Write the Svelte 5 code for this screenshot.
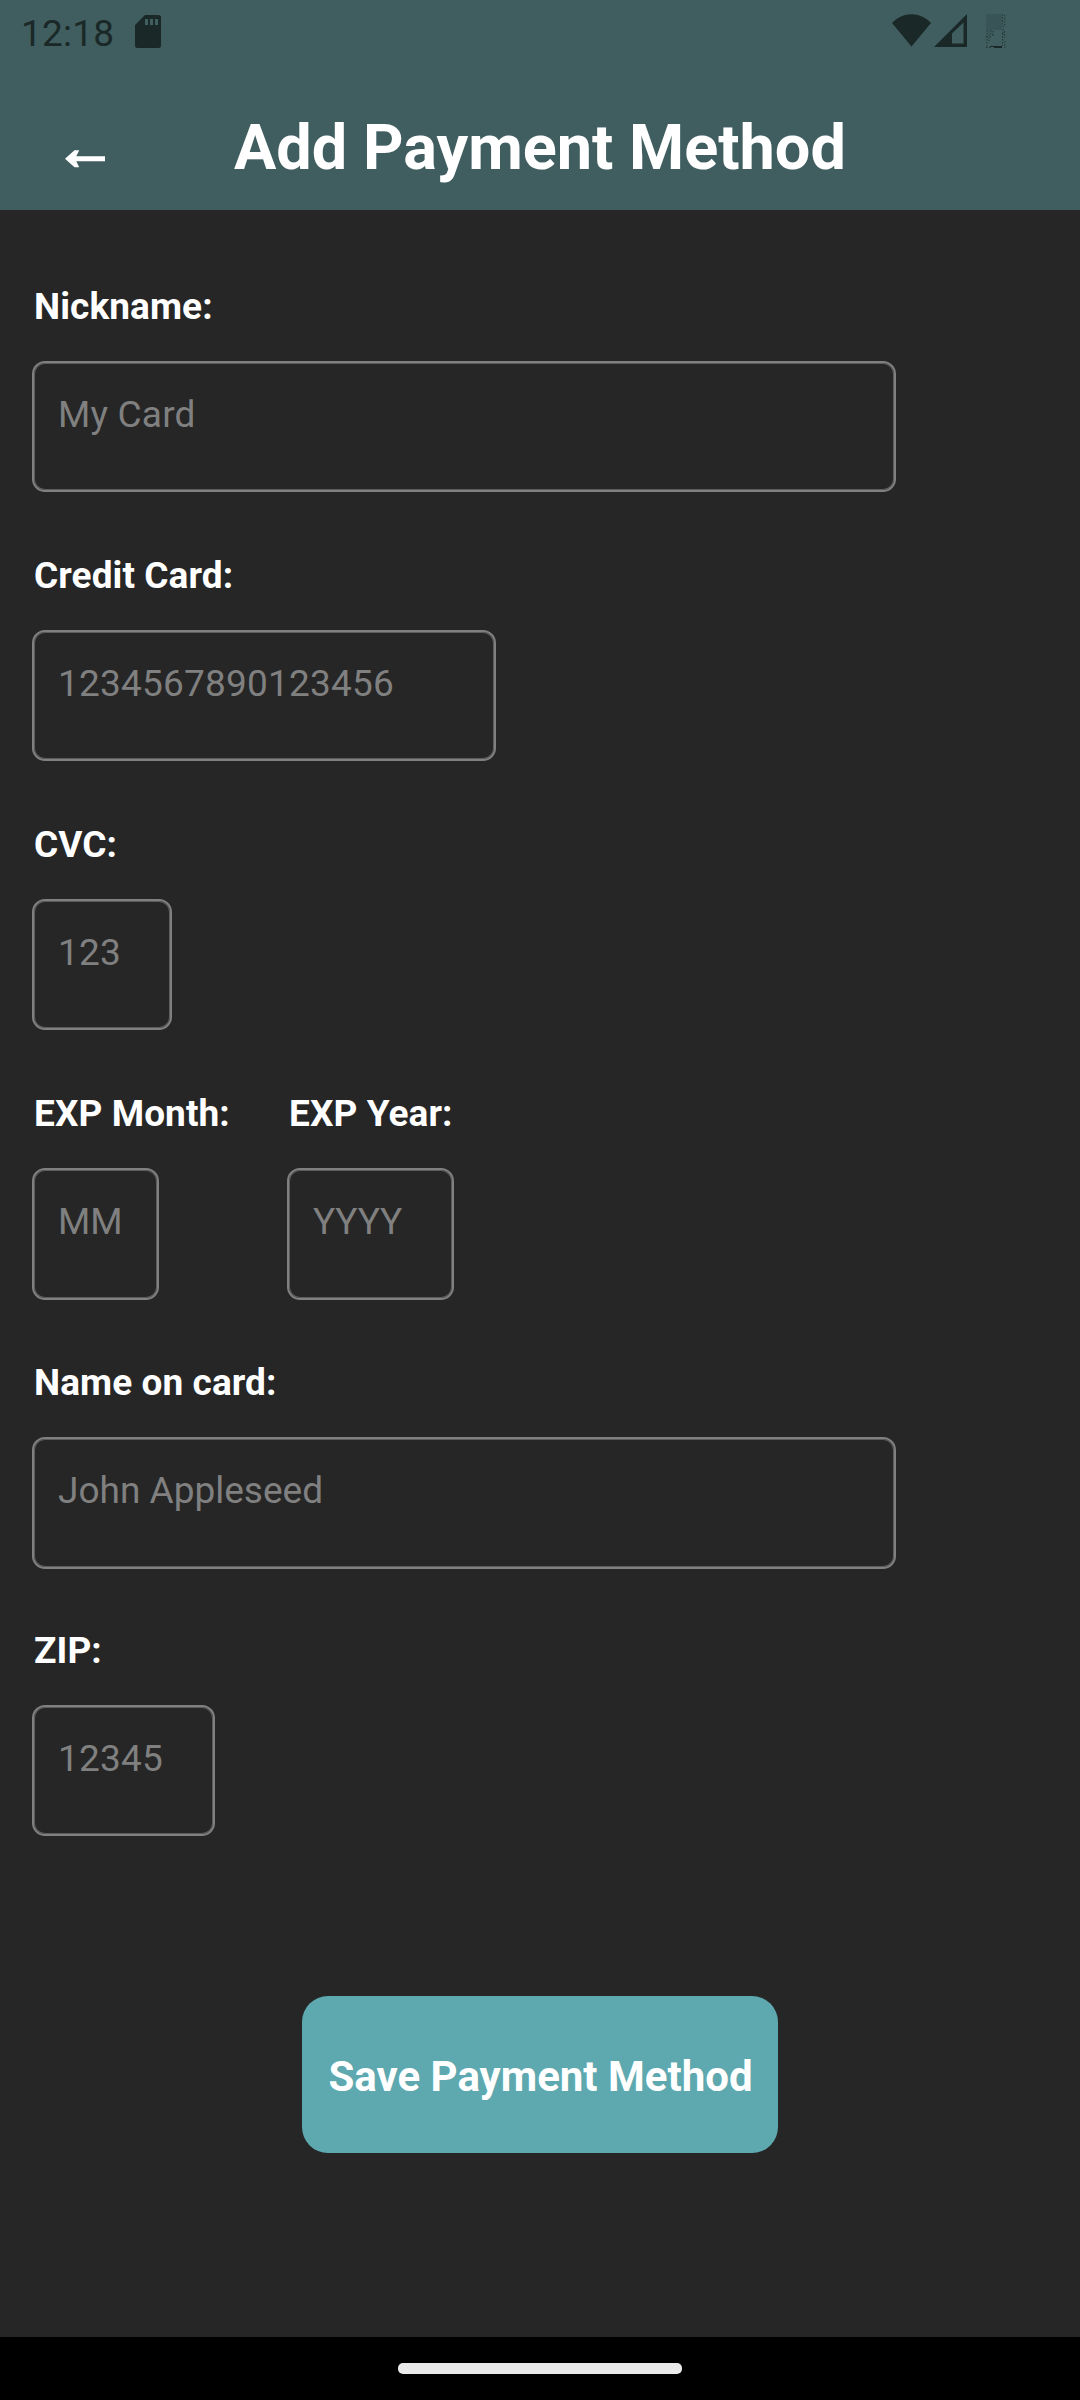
<script>
  const rows = [
    [{ id: 'nickname', label: 'Nickname:', hint: 'My Card' }],
    [{ id: 'card', label: 'Credit Card:', hint: '1234567890123456' }],
    [{ id: 'cvc', label: 'CVC:', hint: '123' }],
    [
      { id: 'month', label: 'EXP Month:', hint: 'MM' },
      { id: 'year', label: 'EXP Year:', hint: 'YYYY' }
    ],
    [{ id: 'holder', label: 'Name on card:', hint: 'John Appleseed' }],
    [{ id: 'zip', label: 'ZIP:', hint: '12345' }]
  ];
</script>

<div class="screen">
  <header>
    <div class="status">
      <span class="time">12:18</span>
      <svg class="sd" width="26" height="33" viewBox="0 0 26 33">
        <path fill-rule="evenodd" d="M10 0H23.5Q26 0 26 2.5V30.5Q26 33 23.5 33H2.5Q0 33 0 30.5V10ZM10 4V10H13V4ZM15 4V10H18V4ZM20 4V10H23V4Z" />
      </svg>
      <svg class="wifi" width="39" height="33" viewBox="0 0 39 33">
        <path d="M0 9C10.500-2.700 28.500-2.700 39 9L19.500 32.500Z" />
      </svg>
      <svg class="signal" width="33" height="33" viewBox="0 0 33 33">
        <path fill-rule="evenodd" d="M33 0V33H0ZM29.500 8.500L18 19.500V29.500H29.500Z" />
      </svg>
      <svg class="battery" width="20" height="34" viewBox="0 0 20 34">
        <path opacity=".16" d="M0 0H16V16H0Z" />
        <path class="trace" d="M16.500 0V11M18.700 1V12M17 12V20M18.500 17V24M16.500 19V32M18.800 27V34M1 16V33M3 17V27M5 16V20M7 17V22M4 23L7 20" />
        <path d="M8 32H16V34H8Z" />
        <path d="M4 32H8V33H4Z" />
        <path class="trace" d="M0 33.500H5M0 22.500H3" />
      </svg>
    </div>
    <div class="bar">
      <button class="back" aria-label="Back">
        <svg width="40" height="18" viewBox="0 0 40 18">
          <path d="M0 8.800L9.500 .3H14.200L11.300 6.200H40V11.300H11.300L14.200 17.300H9.500Z" />
        </svg>
      </button>
      <h1>Add Payment Method</h1>
    </div>
  </header>

  <main>
    <form>
      {#each rows as row}
        <div class="row">
          {#each row as field}
            <div class="field {field.id}">
              <label for={field.id}>{field.label}</label>
              <div class="box" id={field.id}><span>{field.hint}</span></div>
            </div>
          {/each}
        </div>
      {/each}
    </form>
    <button class="save">Save Payment Method</button>
  </main>

  <footer><div class="pill"></div></footer>
</div>

<style>
  :global(body) {
    margin: 0;
    background: #262626;
  }
  .screen {
    width: 1080px;
    height: 2400px;
    display: flex;
    flex-direction: column;
    background: #262626;
    font-family: Roboto, 'Liberation Sans', sans-serif;
    overflow: hidden;
  }
  button {
    border: 0;
    padding: 0;
    font-family: inherit;
  }
  header {
    height: 210px;
    flex: none;
    background: #405e60;
  }
  .status {
    height: 66px;
    padding: 0 74px 0 21px;
    box-sizing: border-box;
    display: flex;
    align-items: flex-start;
    color: #1a2827;
    fill: #1a2827;
  }
  .time {
    width: 114px;
    padding-top: 14px;
    font-size: 37px;
    line-height: 40px;
    letter-spacing: .2px;
  }
  .sd {
    margin-top: 15px;
  }
  .wifi {
    margin: 14px 3px 0 auto;
  }
  .signal {
    margin: 14px 19px 0 0;
  }
  .battery {
    margin-top: 14px;
  }
  .trace {
    fill: none;
    stroke: #1a2827;
    stroke-width: 1;
    stroke-dasharray: 1.500 1.500;
    opacity: .75;
  }
  .bar {
    display: flex;
    height: 144px;
  }
  .back {
    width: 169px;
    margin-left: 65px;
    padding-top: 84px;
    display: flex;
    align-items: flex-start;
    background: none;
    fill: #fff;
  }
  h1 {
    margin: 0;
    padding-top: 45px;
    color: #fff;
    font-size: 63px;
    line-height: 74px;
    font-weight: 700;
    white-space: nowrap;
  }
  main {
    flex: 1;
    display: flex;
    flex-direction: column;
    align-items: center;
  }
  form {
    width: 1016px;
    padding-top: 75px;
    display: grid;
    grid-template-rows: repeat(4, 269px) 268px 207px;
  }
  .row {
    display: flex;
    gap: 128px;
  }
  .field {
    width: 864px;
  }
  label {
    display: block;
    height: 76px;
    padding-left: 2px;
    color: #fff;
    font-size: 37px;
    line-height: 44px;
    font-weight: 700;
    letter-spacing: .08px;
    white-space: nowrap;
  }
  .box {
    height: 131px;
    box-sizing: border-box;
    padding: 30px 0 0 24px;
    border: 2px solid #808080;
    border-radius: 13px;
    box-shadow: inset 0 0 0 1px #5c5c5c;
    color: #808080;
    font-size: 37px;
    line-height: 44px;
    letter-spacing: .2px;
  }
  .card { width: 464px; }
  .cvc { width: 140px; }
  .month { width: 127px; }
  .year { width: 167px; }
  .zip { width: 183px; }
  .month .box,
  .year .box,
  .holder .box {
    height: 132px;
    letter-spacing: 0;
  }
  .year .box {
    letter-spacing: -.2px;
  }
  .save {
    width: 476px;
    height: 157px;
    margin-top: 160px;
    padding: 5px 0 0 1px;
    border-radius: 26px;
    background: #5ea8af;
    color: #fff;
    font-size: 42px;
    line-height: 50px;
    font-weight: 700;
    white-space: nowrap;
  }
  footer {
    height: 63px;
    flex: none;
    background: #000;
    display: flex;
    justify-content: center;
  }
  .pill {
    width: 284px;
    height: 11px;
    margin-top: 26px;
    border-radius: 5px;
    background: #ebebeb;
  }
</style>
